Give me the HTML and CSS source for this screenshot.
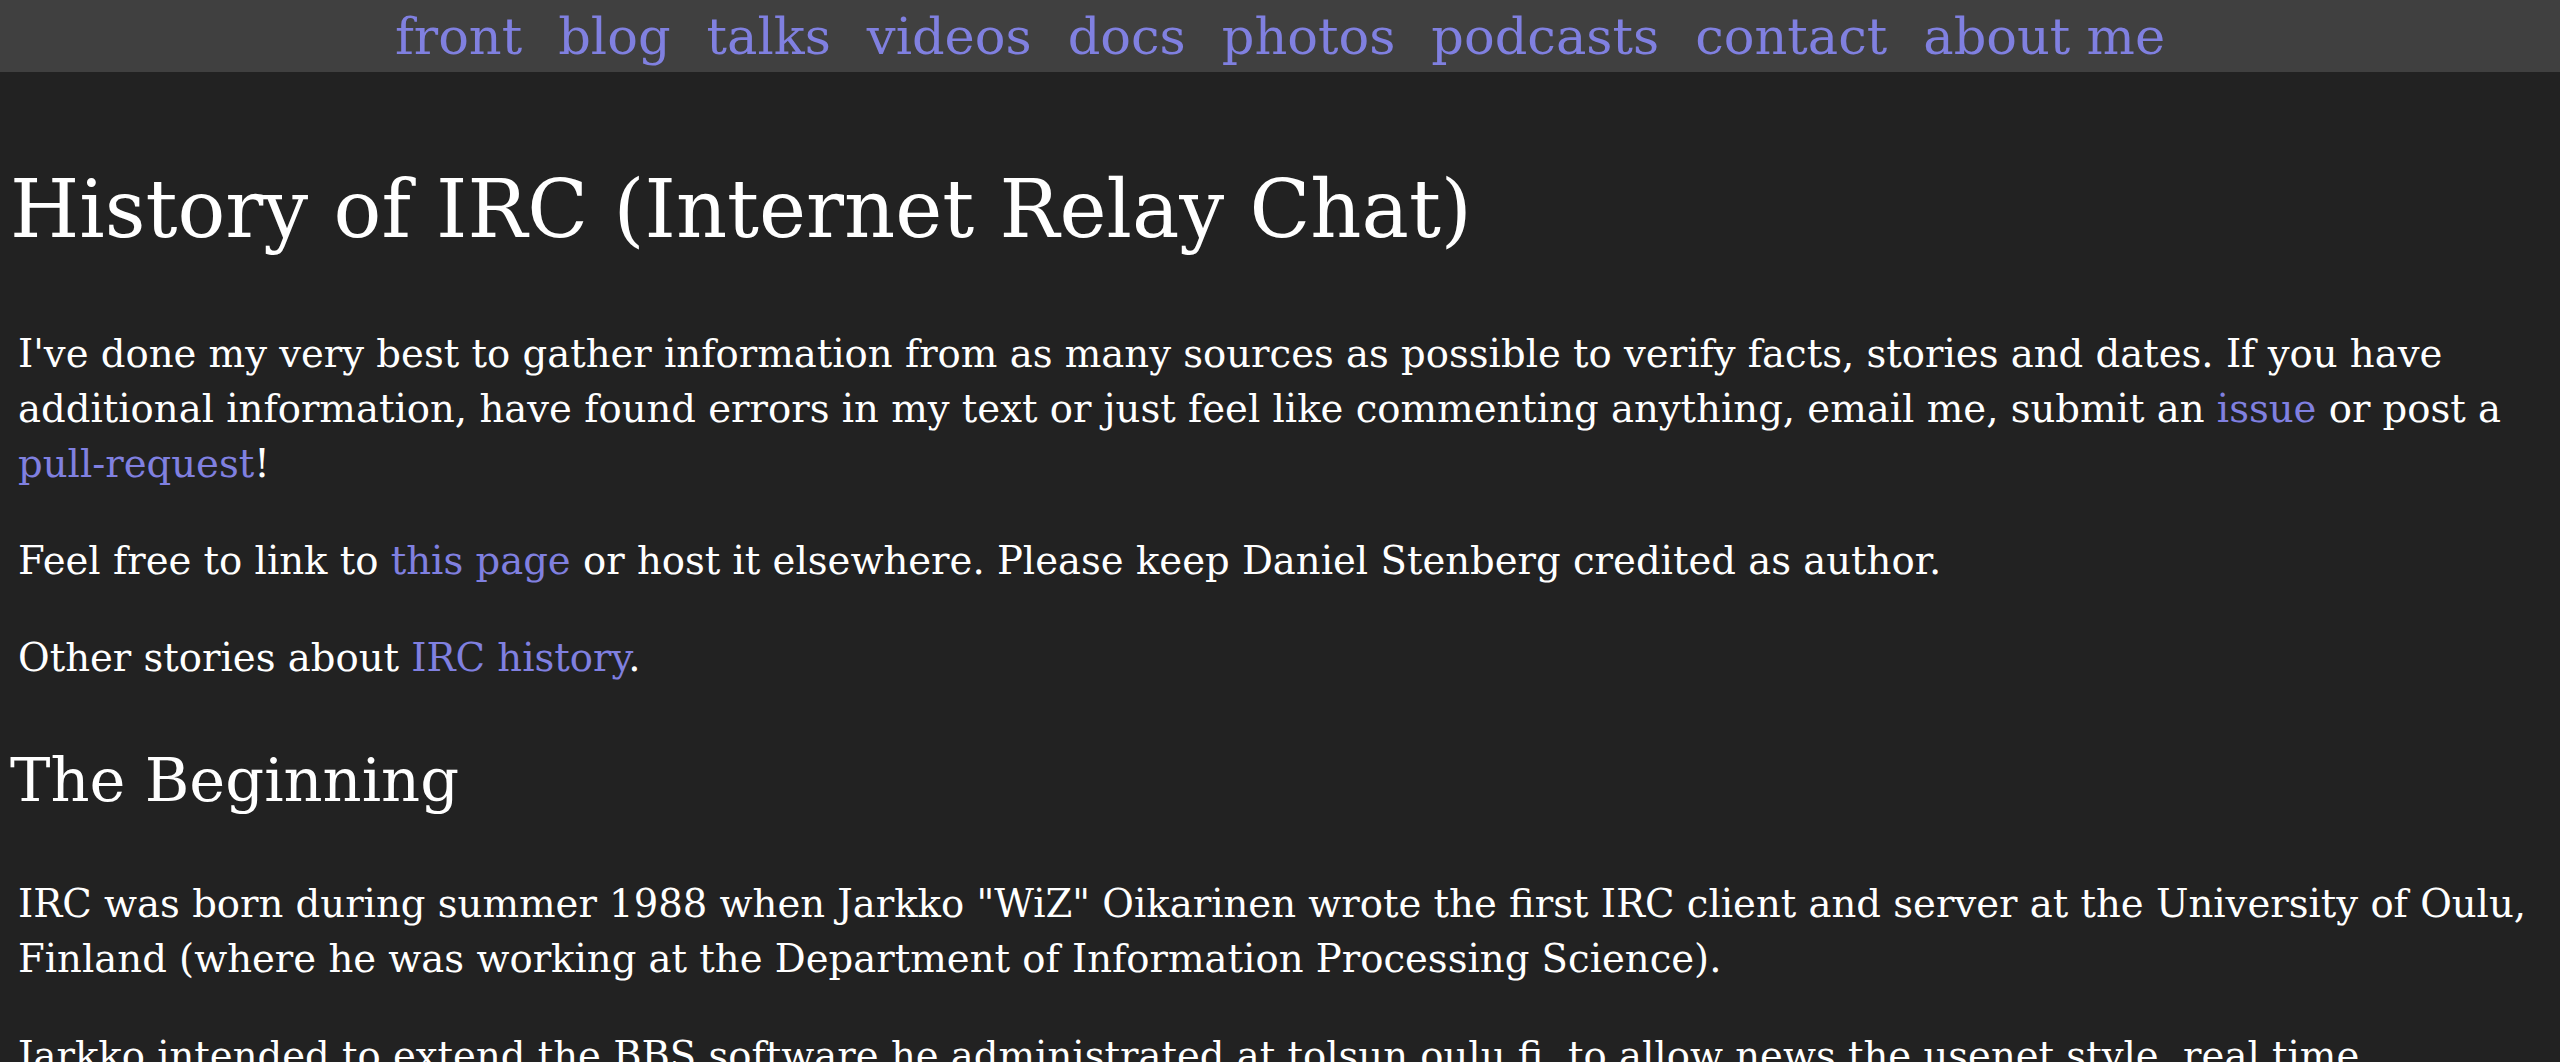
FILE: index.html
```html
<!DOCTYPE html>
<html lang="en">
<head>
<meta charset="utf-8">
<title>History of IRC (Internet Relay Chat)</title>
<link rel="stylesheet" href="styles.css">
</head>
<body>
<nav class="menu">
<a href="#">front</a>
<a href="#">blog</a>
<a href="#">talks</a>
<a href="#">videos</a>
<a href="#">docs</a>
<a href="#">photos</a>
<a href="#">podcasts</a>
<a href="#">contact</a>
<a href="#">about me</a>
</nav>
<main class="content">
<h1 class="title">History of IRC (Internet Relay Chat)</h1>
<p>I've done my very best to gather information from as many sources as possible to verify facts, stories and dates. If you have additional information, have found errors in my text or just feel like commenting anything, email me, submit an <a href="#">issue</a> or post a <a href="#">pull-request</a>!</p>
<p>Feel free to link to <a href="#">this page</a> or host it elsewhere. Please keep Daniel Stenberg credited as author.</p>
<p>Other stories about <a href="#">IRC history</a>.</p>
<h2 class="section">The Beginning</h2>
<p>IRC was born during summer 1988 when Jarkko "WiZ" Oikarinen wrote the first IRC client and server at the University of Oulu, Finland (where he was working at the Department of Information Processing Science).</p>
<p>Jarkko intended to extend the BBS software he administrated at tolsun.oulu.fi, to allow news the usenet style, real time discussions and similar BBS features.</p>
</main>
</body>
</html>
```

FILE: styles.css
```css
html, body {
  margin: 0;
  padding: 0;
  background: #222222;
  color: #ffffff;
  font-family: "DejaVu Serif", "Liberation Serif", serif;
}

a {
  color: #8080e0;
  text-decoration: none;
}

.menu {
  background: #404040;
  height: 72px;
  display: flex;
  justify-content: center;
  align-items: flex-start;
  gap: 36px;
  font-size: 51px;
  overflow: hidden;
}

.menu a {
  line-height: 74px;
  white-space: nowrap;
}

.content {
  padding: 0 10px;
  overflow: hidden;
}

.title {
  font-size: 79.5px;
  font-weight: normal;
  line-height: 1.2;
  margin: 90px 0 69px 0;
}

.content p {
  font-size: 38.6px;
  line-height: 55px;
  margin: 42px 0 42px 8px;
}

.section {
  font-size: 60.7px;
  font-weight: normal;
  line-height: 1.2;
  margin: 59px 0;
}
```
